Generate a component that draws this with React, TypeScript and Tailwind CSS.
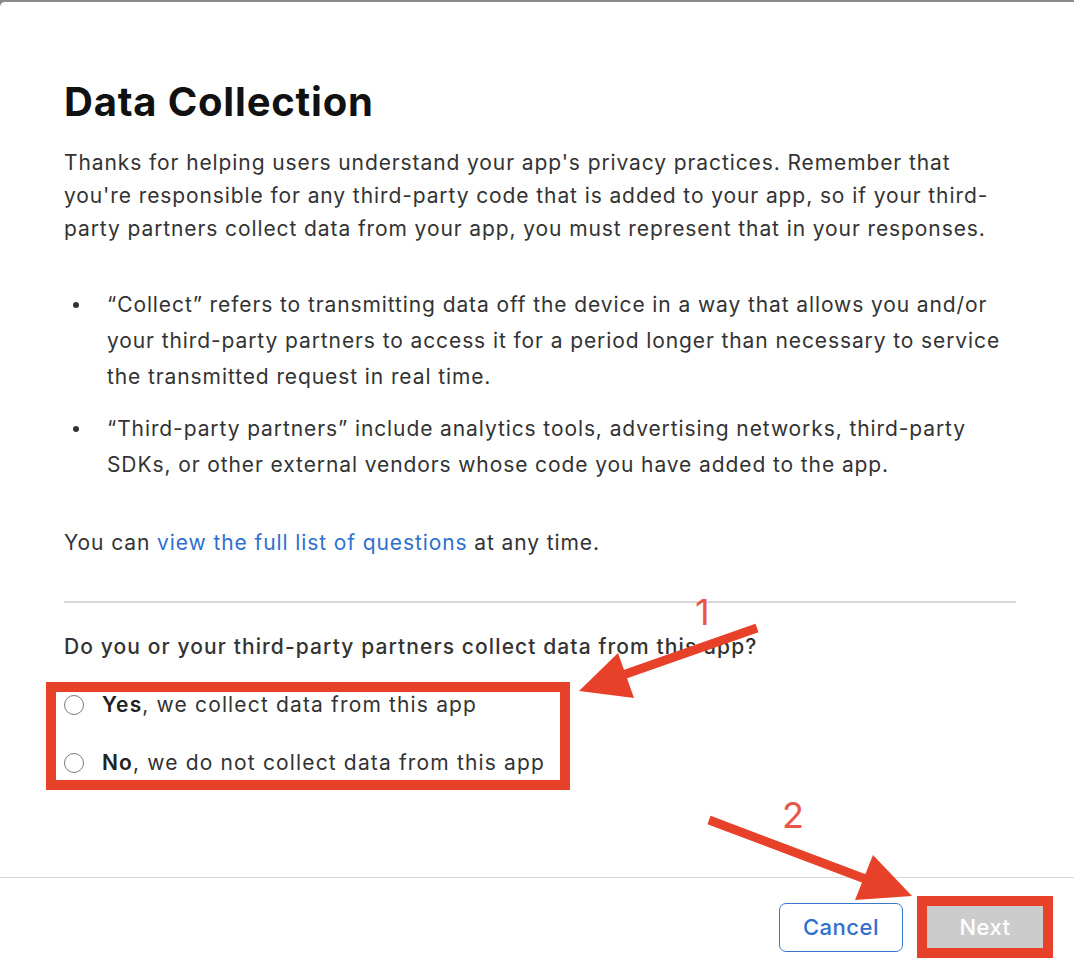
import React from 'react';

const font = { fontFamily: 'Inter, "Liberation Sans", sans-serif' };

const Radio: React.FC<{ bold: string; rest: string }> = ({ bold, rest }) => (
  <label className="flex items-center h-[58px] text-[21px] tracking-[1.15px] text-[#333]">
    <span className="w-[20px] h-[20px] rounded-full border border-[#7a7a7a] bg-white shrink-0" />
    <span className="ml-[18px]">
      <span className="font-semibold text-[#222]">{bold}</span>
      {rest}
    </span>
  </label>
);

const Bullet: React.FC<{ children: React.ReactNode }> = ({ children }) => (
  <li className="flex">
    <span className="w-[43px] shrink-0 pt-[15px] pl-[9px]">
      <span className="block w-[6px] h-[6px] rounded-full bg-[#333]" />
    </span>
    <span>{children}</span>
  </li>
);

const Annotations: React.FC = () => (
  <svg className="absolute inset-0 pointer-events-none" width="1074" height="974" viewBox="0 0 1074 974">
    {/* arrow 1 */}
    <line x1="757" y1="628" x2="620" y2="676" stroke="#e8412a" strokeWidth="9" />
    <polygon points="579,691 618,653 634,698" fill="#e8412a" />
    {/* arrow 2 */}
    <line x1="709" y1="820" x2="868" y2="880" stroke="#e8412a" strokeWidth="9" />
    <polygon points="912,896 873,855 855,900" fill="#e8412a" />
    <text x="695" y="625" fill="#e8564a" fontSize="36" fontFamily="Inter, 'Liberation Sans', sans-serif">1</text>
    <text x="782" y="828" fill="#e8564a" fontSize="36" fontFamily="Inter, 'Liberation Sans', sans-serif">2</text>
  </svg>
);

export default function App() {
  return (
    <div className="relative w-[1074px] h-[974px] bg-[#8b8b8b] pt-[2px] overflow-hidden" style={font}>
      <div className="h-[972px] bg-white rounded-tl-[5px] flex flex-col">
        <div className="flex-1 pl-[64px] pr-[58px] pt-[76px]">
          <h1 className="text-[40px] leading-[48px] font-bold text-[#111] tracking-[0.8px]">Data Collection</h1>
          <div className="text-[21px] tracking-[0.9px] text-[#333]">
            <p className="mt-[20px] leading-[33px]">
              Thanks for helping users understand your app's privacy practices. Remember that you're responsible for any third-party code that is added to your app, so if your third-party partners collect data from your app, you must represent that in your responses.
            </p>
            <ul className="mt-[42px] leading-[36px] flex flex-col gap-[16px]">
              <Bullet>“Collect” refers to transmitting data off the device in a way that allows you and/or your third-party partners to access it for a period longer than necessary to service the transmitted request in real time.</Bullet>
              <Bullet>“Third-party partners” include analytics tools, advertising networks, third-party SDKs, or other external vendors whose code you have added to the app.</Bullet>
            </ul>
            <p className="mt-[43px] leading-[33px]">
              You can <span className="text-[#2f6fcf]">view the full list of questions</span> at any time.
            </p>
            <div className="mt-[42px] h-[2px] bg-[#d8d8d8]" />
            <p className="mt-[27px] leading-[33px] font-medium tracking-[1.1px]">
              Do you or your third-party partners collect data from this app?
            </p>
          </div>
          <div className="relative mt-[13px] w-fit">
            <Radio bold="Yes" rest=", we collect data from this app" />
            <Radio bold="No" rest=", we do not collect data from this app" />
            <div className="absolute -left-[18px] top-[6px] w-[524px] h-[108px] border-[10px] border-[#e8412a]" />
          </div>
        </div>
        <div className="h-[97px] border-t border-[#d8d8d8] flex items-start justify-end gap-[14px] pt-[18px] pr-[21px]">
          <button className="mt-[7px] w-[124px] h-[49px] rounded-[7px] border border-[#3a78d0] text-[#2f6fcf] text-[22px] tracking-[0.5px] font-medium bg-white">
            Cancel
          </button>
          <div className="border-[10px] border-[#e8412a]">
            <button className="w-[116px] h-[42px] bg-[#cccccc] text-white text-[22px] tracking-[0.5px] font-medium">Next</button>
          </div>
        </div>
      </div>
      <Annotations />
    </div>
  );
}
